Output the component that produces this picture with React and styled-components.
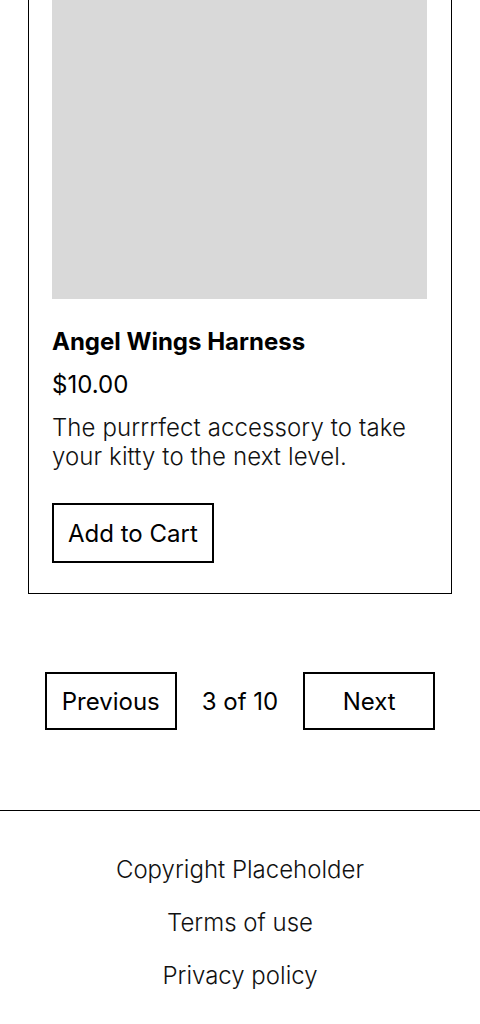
import styled, { createGlobalStyle } from "styled-components";

const GlobalStyle = createGlobalStyle`
  body {
    margin: 0;
    font-family: Inter, "Noto Sans", sans-serif;
    color: #000;
    background: #fff;
  }
`;

const product = {
  name: "Angel Wings Harness",
  price: "$10.00",
  description: "The purrrfect accessory to take your kitty to the next level.",
};

const footerLinks = ["Copyright Placeholder", "Terms of use", "Privacy policy"];

export default function App() {
  return (
    <>
      <GlobalStyle />
      <StyledPageMain>
        <ProductCard>
          <ImagePlaceholder aria-hidden="true" />
          <ProductName>{product.name}</ProductName>
          <ProductPrice>{product.price}</ProductPrice>
          <ProductDescription>{product.description}</ProductDescription>
          <AddButton type="button">Add to Cart</AddButton>
        </ProductCard>

        <Pagination>
          <PageButton type="button">Previous</PageButton>
          <PageCount>3 of 10</PageCount>
          <PageButton type="button">Next</PageButton>
        </Pagination>
      </StyledPageMain>

      <Footer>
        {footerLinks.map((link) => (
          <FooterLink key={link}>{link}</FooterLink>
        ))}
      </Footer>
    </>
  );
}

const StyledPageMain = styled.main`
  display: flex;
  flex-direction: column;
`;

const ProductCard = styled.article`
  display: flex;
  flex-direction: column;
  align-items: flex-start;
  margin: 0 28px;
  padding: 0 24px 30px 23px;
  border: 1px solid #000;
  border-top: none;
`;

const ImagePlaceholder = styled.div`
  align-self: stretch;
  height: 299px;
  background-color: #d9d9d9;
`;

const ProductName = styled.h2`
  margin: 28px 0 0;
  font-size: 24px;
  line-height: 29px;
  font-weight: 700;
`;

const ProductPrice = styled.p`
  margin: 14px 0 0;
  font-size: 24px;
  line-height: 29px;
  font-weight: 400;
`;

const ProductDescription = styled.p`
  margin: 14px 0 0;
  font-size: 24px;
  line-height: 29px;
  font-weight: 300;
  letter-spacing: 0.1px;
  color: #111;
`;

const AddButton = styled.button`
  margin-top: 32px;
  height: 60px;
  padding: 0 14px;
  border: 2px solid #000;
  background-color: #fff;
  font-family: inherit;
  font-size: 24px;
  font-weight: 400;
  color: #000;
`;

const Pagination = styled.nav`
  display: flex;
  justify-content: center;
  align-items: center;
  gap: 25px;
  margin-top: 78px;
`;

const PageButton = styled.button`
  width: 132px;
  height: 58px;
  border: 2px solid #000;
  background-color: #fff;
  font-family: inherit;
  font-size: 24px;
  font-weight: 400;
  color: #000;
`;

const PageCount = styled.span`
  font-size: 24px;
  line-height: 29px;
`;

const Footer = styled.footer`
  display: flex;
  flex-direction: column;
  align-items: center;
  gap: 24px;
  margin-top: 80px;
  padding: 44px 0 35px;
  border-top: 1px solid #000;
`;

const FooterLink = styled.p`
  margin: 0;
  font-size: 24px;
  line-height: 29px;
  font-weight: 300;
  color: #111;
`;
